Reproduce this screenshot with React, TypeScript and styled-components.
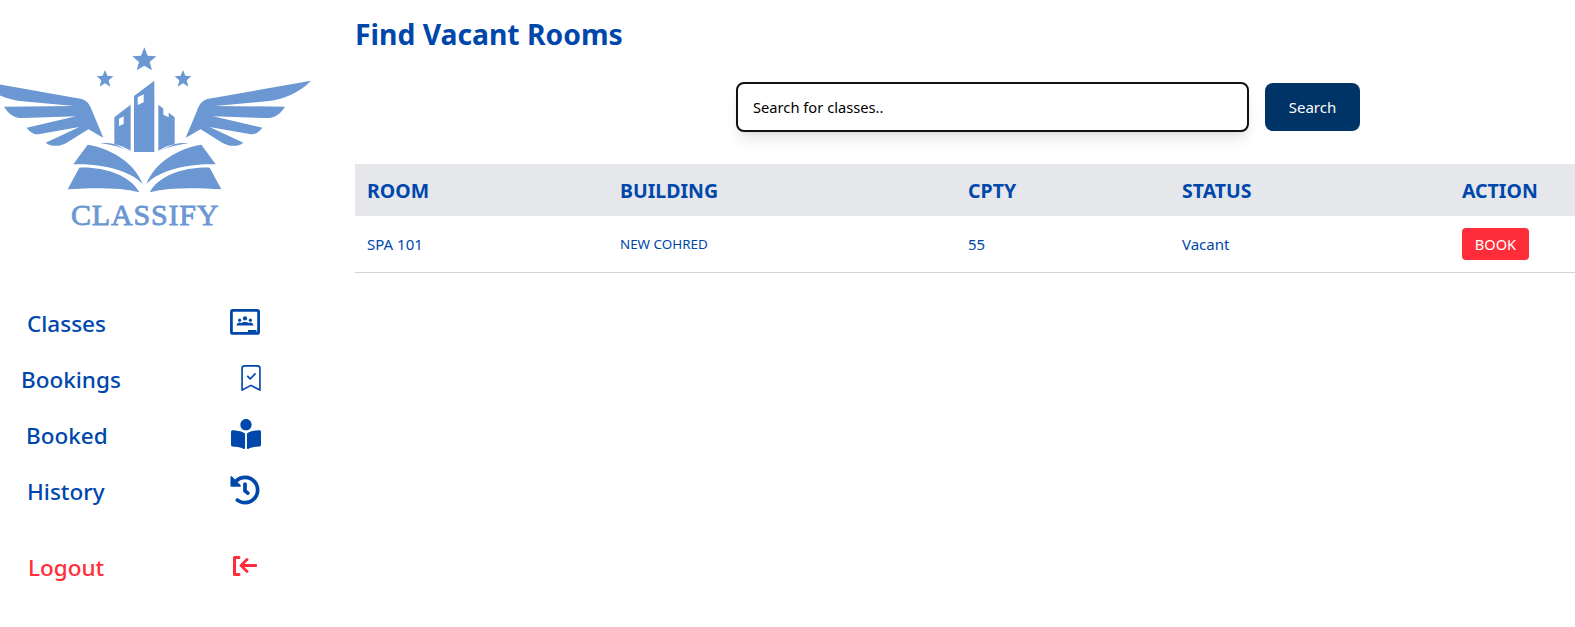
import React from "react";
import styled, { createGlobalStyle } from "styled-components";
import { BsBookmarkCheck } from "react-icons/bs";
import { FaBookReader, FaHistory } from "react-icons/fa";

const Global = createGlobalStyle`
  html, body { margin: 0; padding: 0; background: #fff; overflow: hidden; }
  body { font-family: "Noto Sans", "Open Sans", "Liberation Sans", sans-serif; color: #0047ab; }
`;

const Page = styled.div`
  display: flex;
  width: 1575px;
  height: 627px;
`;

const Sidebar = styled.aside`
  flex: 0 0 355px;
  display: flex;
  flex-direction: column;
  padding-top: 30px;
`;

const Logo = styled.svg`
  display: block;
  width: 320px;
  height: 210px;
`;

const LogoText = styled.text`
  font-family: "Liberation Serif", serif;
  font-weight: 400;
  font-size: 90px;
  fill: #6b97d2;
  stroke: #6b97d2;
  stroke-width: 2.5px;
`;

const Nav = styled.nav`
  display: flex;
  flex-direction: column;
  margin-top: 55px;
  width: 262px;
`;

const NavRow = styled.a<{ $indent: number; $danger?: boolean; $gapTop?: number }>`
  display: flex;
  align-items: center;
  justify-content: space-between;
  height: 56px;
  margin-top: ${(p) => p.$gapTop ?? 0}px;
  padding-left: ${(p) => p.$indent}px;
  font-size: 22.5px;
  font-weight: 550;
  color: ${(p) => (p.$danger ? "#ff2d3a" : "#0047ab")};
`;

const IconSlot = styled.span<{ $w: number; $shift?: number }>`
  display: flex;
  align-items: center;
  justify-content: center;
  width: ${(p) => p.$w}px;
  margin-right: ${(p) => p.$shift ?? 2}px;
  margin-top: -3px;
  & > svg { flex: none; }
`;

const Main = styled.main`
  flex: 1;
  display: flex;
  flex-direction: column;
  min-width: 0;
`;

const Title = styled.h1`
  margin: 14px 0 0;
  font-size: 28.3px;
  line-height: 40px;
  font-weight: 700;
  color: #0047ab;
`;

const SearchBar = styled.form`
  display: flex;
  align-items: center;
  gap: 16px;
  margin: 28px 0 0 381px;
`;

const SearchInput = styled.input`
  box-sizing: border-box;
  width: 513px;
  height: 50px;
  padding: 0 15px;
  border: 2px solid #111;
  border-radius: 8px;
  background: #fff;
  font: 400 14.7px "Noto Sans", sans-serif;
  color: #000;
  outline: none;
  box-shadow: 0 10px 15px -3px rgba(0, 0, 0, 0.1), 0 4px 6px -4px rgba(0, 0, 0, 0.1);
  &::placeholder { color: #000; opacity: 1; }
`;

const SearchButton = styled.button`
  width: 95px;
  height: 48px;
  border: 0;
  border-radius: 8px;
  background: #003366;
  color: #fff;
  font: 400 15px "Noto Sans", sans-serif;
`;

const Table = styled.table`
  width: 1220px;
  margin-top: 32px;
  border-collapse: collapse;
  table-layout: fixed;
`;

const Head = styled.th<{ $w: number }>`
  box-sizing: border-box;
  width: ${(p) => p.$w}px;
  height: 52px;
  padding: 0 12px;
  background: #e5e7eb;
  text-align: left;
  font-size: 19.5px;
  font-weight: 700;
  color: #0047ab;
`;

const Row = styled.tr`
  border-bottom: 1.5px solid #d1d5db;
`;

const Cell = styled.td<{ $small?: boolean }>`
  height: 56px;
  padding: 0 12px;
  font-size: ${(p) => (p.$small ? 13.4 : 15)}px;
  color: #0047ab;
`;

const BookButton = styled.button`
  display: block;
  width: 67px;
  height: 32px;
  padding: 0;
  border: 0;
  border-radius: 4px;
  background: #ff2d3a;
  color: #fff;
  font: 400 14.6px "Noto Sans", sans-serif;
`;

const wing =
  "M-66,152 L245,207 C262,212 270,225 276,242 L310,323 C295,316 280,306 265,298 L205,335 C185,350 155,352 137,338 L238,291 L115,313 C100,314 90,305 80,293 L228,259 L70,264 C40,265 25,250 12,230 L222,228 L60,213 C20,208 -30,190 -66,152 Z";
const sideTower = "M343,262 L392,224 L392,362 C375,352 360,346 343,342 Z";
const towerBase = "M300,339 C320,338 335,340 343,342 L390,364 C365,352 335,344 300,339 Z";
const upperPage = "M263,344 C330,355 402,395 428,462 C390,420 300,400 220,403 Z";
const lowerPage = "M238,413 C310,410 390,435 418,487 C350,470 270,475 203,478 Z";

const HalfMark = () => (
  <>
    <path d={wing} />
    <path d={sideTower} />
    <path d={towerBase} />
    <path d={upperPage} />
    <path d={lowerPage} />
  </>
);

const LogoMark = () => (
  <Logo viewBox="0 0 960 630" role="img" aria-label="Classify logo">
    <g fill="#6b97d2">
      <HalfMark />
      <g transform="translate(867,0) scale(-1,1)">
        <HalfMark />
      </g>
      <path d="M402,198 L463,152 L463,366 L402,366 Z" />
      <polygon points="433,52 443,77 469,79 449,96 456,121 433,107 410,121 417,96 397,79 423,77" />
      <polygon points="315,120 322,137 340,139 326,151 331,170 315,160 299,170 304,151 290,139 308,137" />
      <polygon points="549,120 556,137 574,139 560,151 565,170 549,160 533,170 538,151 524,139 542,137" />
    </g>
    <g fill="#fff">
      <polygon points="357,266 371,259 371,282 357,288" />
      <polygon points="413,202 431,193 431,217 413,225" />
      <polygon points="490,234 506,243 506,262 490,254" />
    </g>
    <LogoText x="213" y="586" textLength="442" lengthAdjust="spacing">CLASSIFY</LogoText>
  </Logo>
);

const ClassesIcon = () => (
  <svg width="30" height="26" viewBox="0 0 30 26" fill="#0047ab" aria-hidden="true">
    <rect x="1.4" y="1.4" width="27.2" height="23" rx="1.5" fill="none" stroke="#0047ab" strokeWidth="2.8" />
    <circle cx="15" cy="9.4" r="2.1" />
    <circle cx="9.6" cy="11.2" r="1.6" />
    <circle cx="20.4" cy="11.2" r="1.6" />
    <path d="M6.5 16.4c.3-1.8 1.6-2.8 3.2-2.8.7 0 1.3.2 1.7.5.8-.6 2.2-1 3.6-1s2.8.4 3.6 1c.4-.3 1-.5 1.7-.5 1.6 0 2.9 1 3.2 2.8z" />
    <rect x="18" y="21" width="8.5" height="4" />
  </svg>
);

const LogoutIcon = () => (
  <svg width="24" height="20" viewBox="0 0 24 20" fill="none" stroke="#ff2d3a" aria-hidden="true">
    <path d="M6 1.5H1.5V18.500H6" strokeWidth="3" strokeLinecap="round" strokeLinejoin="round" />
    <path d="M23 9.500H8.500M14 3.500L8 9.500L14 15.500" strokeWidth="2.800" strokeLinecap="round" strokeLinejoin="round" />
  </svg>
);

export default function App() {
  return (
    <Page>
      <Global />
      <Sidebar>
        <LogoMark />
        <Nav>
          <NavRow $indent={27}>
            Classes
            <IconSlot $w={30}><ClassesIcon /></IconSlot>
          </NavRow>
          <NavRow $indent={21}>
            Bookings
            <IconSlot $w={18}><BsBookmarkCheck size={26} color="#0047ab" /></IconSlot>
          </NavRow>
          <NavRow $indent={26}>
            Booked
            <IconSlot $w={30} $shift={1}><FaBookReader size={30} color="#0047ab" /></IconSlot>
          </NavRow>
          <NavRow $indent={27}>
            History
            <IconSlot $w={30}><FaHistory size={30} color="#0047ab" /></IconSlot>
          </NavRow>
          <NavRow $indent={28} $danger $gapTop={20}>
            Logout
            <IconSlot $w={24} $shift={5}><LogoutIcon /></IconSlot>
          </NavRow>
        </Nav>
      </Sidebar>
      <Main>
        <Title>Find Vacant Rooms</Title>
        <SearchBar>
          <SearchInput placeholder="Search for classes.." />
          <SearchButton type="button">Search</SearchButton>
        </SearchBar>
        <Table>
          <thead>
            <tr>
              <Head $w={253}>ROOM</Head>
              <Head $w={348}>BUILDING</Head>
              <Head $w={214}>CPTY</Head>
              <Head $w={280}>STATUS</Head>
              <Head $w={125}>ACTION</Head>
            </tr>
          </thead>
          <tbody>
            <Row>
              <Cell>SPA 101</Cell>
              <Cell $small>NEW COHRED</Cell>
              <Cell>55</Cell>
              <Cell>Vacant</Cell>
              <Cell><BookButton type="button">BOOK</BookButton></Cell>
            </Row>
          </tbody>
        </Table>
      </Main>
    </Page>
  );
}
